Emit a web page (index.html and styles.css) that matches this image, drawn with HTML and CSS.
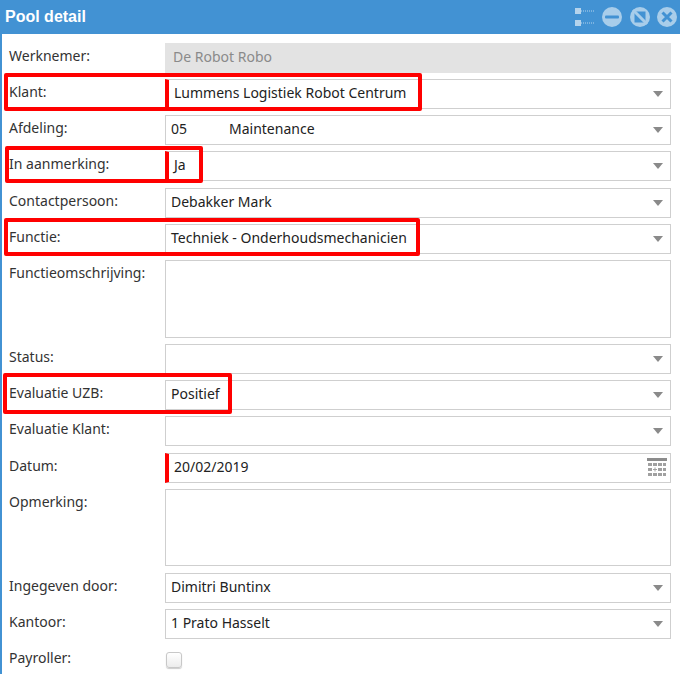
FILE: index.html
```html
<!DOCTYPE html>
<html lang="nl">
<head>
<meta charset="utf-8">
<title>Pool detail</title>
<link rel="stylesheet" href="styles.css">
</head>
<body>
<div class="window">
  <header class="titlebar">
    <h1 class="title">Pool detail</h1>
    <div class="tools">
      <svg class="tool-tree" width="20" height="18" viewBox="0 0 20 18"><rect x="0" y="0" width="6" height="6"/><rect x="0" y="12" width="6" height="6"/><path d="M6 3h14M6 15h14" stroke-dasharray="1 1"/></svg>
      <svg class="tool" width="20" height="20" viewBox="0 0 20 20"><circle cx="10" cy="10" r="10"/><rect x="3" y="8.5" width="14" height="3" rx="1" class="cut"/></svg>
      <svg class="tool" width="20" height="20" viewBox="0 0 20 20"><circle cx="10" cy="10" r="10"/><rect x="4.5" y="4.5" width="11" height="11" class="cut"/><path d="M3 3L17 17" class="slash"/></svg>
      <svg class="tool" width="20" height="20" viewBox="0 0 20 20"><circle cx="10" cy="10" r="10"/><path d="M5.5 5.5L14.5 14.5M14.5 5.5L5.5 14.5" class="cross"/></svg>
    </div>
  </header>
  <form class="form">
    <div class="row"><span class="label">Werknemer:</span><div class="field disabled">De Robot Robo</div></div>
    <div class="row"><span class="label">Klant:</span><div class="field combo required">Lummens Logistiek Robot Centrum</div></div>
    <div class="row"><span class="label">Afdeling:</span><div class="field combo"><span class="code">05</span>Maintenance</div></div>
    <div class="row"><span class="label">In aanmerking:</span><div class="field combo required">Ja</div></div>
    <div class="row"><span class="label">Contactpersoon:</span><div class="field combo">Debakker Mark</div></div>
    <div class="row"><span class="label">Functie:</span><div class="field combo">Techniek - Onderhoudsmechanicien</div></div>
    <div class="row"><span class="label">Functieomschrijving:</span><div class="field area"></div></div>
    <div class="row"><span class="label">Status:</span><div class="field combo"></div></div>
    <div class="row"><span class="label">Evaluatie UZB:</span><div class="field combo">Positief</div></div>
    <div class="row"><span class="label">Evaluatie Klant:</span><div class="field combo"></div></div>
    <div class="row"><span class="label">Datum:</span><div class="field date required">20/02/2019
      <svg class="cal" width="20" height="20" viewBox="0 0 20 20"><rect x="0" y="0" width="20" height="3" fill="#8c8c8c"/><g fill="#a0a0a0"><rect x="1" y="5" width="4" height="3"/><rect x="6" y="5" width="4" height="3"/><rect x="11" y="5" width="4" height="3"/><rect x="16" y="5" width="3" height="3"/><rect x="1" y="10" width="4" height="3"/><rect x="11" y="10" width="4" height="3"/><rect x="16" y="10" width="3" height="3"/><rect x="1" y="15" width="4" height="3"/><rect x="6" y="15" width="4" height="3"/><rect x="11" y="15" width="4" height="3"/><rect x="16" y="15" width="3" height="3"/></g><path d="M6 11.5h4M8 9.5v4" stroke="#a0a0a0"/></svg></div></div>
    <div class="row"><span class="label">Opmerking:</span><div class="field area"></div></div>
    <div class="row"><span class="label">Ingegeven door:</span><div class="field combo">Dimitri Buntinx</div></div>
    <div class="row"><span class="label">Kantoor:</span><div class="field combo">1 Prato Hasselt</div></div>
    <div class="row"><span class="label">Payroller:</span><span class="check"></span></div>
  </form>
  <div class="mark mark-klant"></div>
  <div class="mark mark-aanmerking"></div>
  <div class="mark mark-functie"></div>
  <div class="mark mark-uzb"></div>
</div>
</body>
</html>
```
FILE: styles.css
```css
* { box-sizing: border-box; }
html, body { margin: 0; padding: 0; background: #fff; }
body { width: 680px; height: 674px; overflow: hidden; font-family: "Noto Sans", sans-serif; color: #333; }
.window { position: relative; height: 674px; border-left: 2px solid #4292d3; overflow: hidden; }
.titlebar { display: flex; align-items: center; justify-content: space-between; height: 34px; margin-left: -2px; padding: 0 3px 0 5px; background: #4292d3; }
.title { margin: 0; font: bold 16px "Liberation Sans", sans-serif; color: #fff; }
.tools { display: flex; align-items: center; gap: 7.5px; }
.tool-tree rect { fill: #b4d3ec; }
.tool-tree path { stroke: #b4d3ec; fill: none; stroke-width: 1; }
.tool circle { fill: #a8cdea; }
.tool .cut { fill: #4292d3; }
.tool .slash { stroke: #a8cdea; stroke-width: 3; }
.tool .cross { stroke: #4292d3; stroke-width: 3; }
.form { display: flex; flex-direction: column; gap: 6.25px; padding: 8.5px 9px 0 7px; }
.row { display: flex; align-items: flex-start; }
.label { flex: 0 0 156px; padding-top: 4px; font-size: 14px; line-height: 18px; color: #333; }
.field { position: relative; flex: 1; height: 30px; padding: 0 30px 0 5px; border: 1px solid #cfcfcf; font-size: 14px; line-height: 26px; color: #222; background: #fff; }
.disabled { border-color: #e3e3e3; background: #e3e3e3; color: #8a8a8a; padding-left: 7px; }
.required { border-left: 4px solid #f00; padding-left: 5px; }
.area { height: 77.5px; }
.code { display: inline-block; width: 58px; }
.combo::after { content: ""; position: absolute; right: 7px; top: 11px; border-style: solid; border-width: 6px 5.5px 0; border-color: #8a8a8a transparent transparent; }
.cal { position: absolute; right: 3px; top: 4px; }
.check { width: 16px; height: 16px; margin: 7px 0 0 1px; border: 1px solid #c8c8c8; border-radius: 3px; background: linear-gradient(#fff, #ececec); box-shadow: 0 1px 1px #ccc; }
.mark { position: absolute; border: 4px solid #f00; border-radius: 2px; pointer-events: none; }
.mark-klant { left: 2px; top: 73px; width: 418px; height: 38px; }
.mark-aanmerking { left: 3px; top: 146px; width: 198px; height: 37px; }
.mark-functie { left: 2px; top: 218px; width: 416px; height: 38px; }
.mark-uzb { left: 1px; top: 373px; width: 229px; height: 41px; }
```
